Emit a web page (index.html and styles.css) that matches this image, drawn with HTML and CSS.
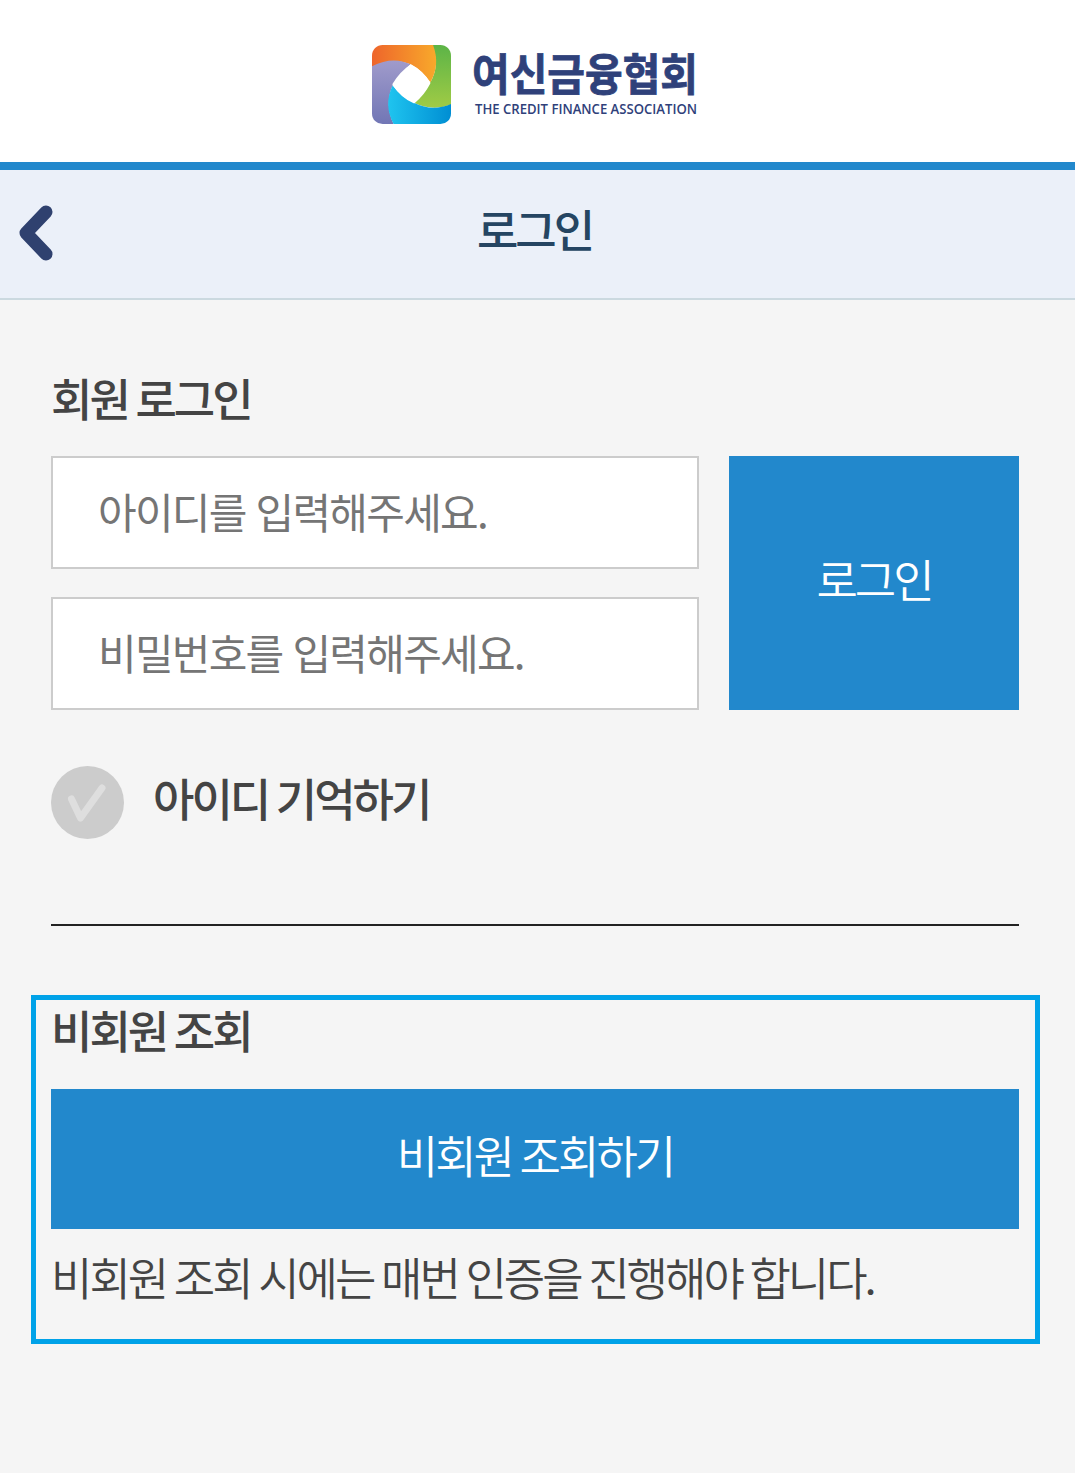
FILE: index.html
```html
<!DOCTYPE html>
<html lang="ko">

<head>
  <meta charset="UTF-8">
  <meta name="viewport" content="width=device-width, initial-scale=1.0">
  <title>여신금융협회 로그인</title>

  <link rel="stylesheet" href="styles.css">
</head>

<body>
  <header class="header">
    <svg class="logo-mark" viewBox="0 0 238 238">
      <defs>
        <linearGradient id="orange">
          <stop offset="0" stop-color="#ee652b" />
          <stop offset="1" stop-color="#f8a92b" />
        </linearGradient>
        <linearGradient id="green" x2="0" y2="1">
          <stop offset="0" stop-color="#5cb447" />
          <stop offset="1" stop-color="#a0cb45" />
        </linearGradient>
        <linearGradient id="purple" x2="0" y2="1">
          <stop offset="0" stop-color="#a09bcb" />
          <stop offset="1" stop-color="#7176b5" />
        </linearGradient>
        <linearGradient id="cyan">
          <stop offset="0" stop-color="#1fc4ef" />
          <stop offset="1" stop-color="#008ed3" />
        </linearGradient>
        <clipPath id="round">
          <rect width="238" height="238" rx="32" />
        </clipPath>
      </defs>
      <g clip-path="url(#round)">
        <path fill="url(#green)" d="M180 0H238V180Q180 200 128 175Q156 148 176 112Q206 60 180 0Z" />
        <path fill="url(#orange)" d="M0 0H184Q206 60 176 112Q150 76 116 58Q62 36 0 66Z" />
        <path fill="url(#purple)" d="M0 64Q62 32 116 58Q84 88 62 122Q38 180 65 238H0Z" />
        <path fill="url(#cyan)" d="M62 122Q90 158 128 175Q182 202 238 178V238H65Q34 180 62 122Z" />
        <path fill="#fff" d="M117 58Q156 78 176 115Q158 151 127 176Q87 160 61 118Q84 80 117 58Z" />
      </g>
    </svg>
    <div class="logo-text">
      <svg width="236" height="56" viewBox="0 0 236 56">
        <text class="logo-ko" x="0" y="46" textLength="226" lengthAdjust="spacingAndGlyphs">여신금융협회</text>
      </svg>
      <svg width="236" height="20" viewBox="0 0 236 20">
        <text class="logo-en" x="3" y="13" textLength="222" lengthAdjust="spacingAndGlyphs">THE CREDIT FINANCE ASSOCIATION</text>
      </svg>
    </div>
  </header>

  <div class="titlebar">
    <a class="back" href="#" aria-label="이전">
      <svg width="36" height="56" viewBox="0 0 36 56">
        <path d="M28 7L8 28L28 49" />
      </svg>
    </a>
    <h1>로그인</h1>
  </div>

  <main class="contain">
    <h2>회원 로그인</h2>
    <form class="login">
      <div class="fields">
        <input type="text" placeholder="아이디를 입력해주세요.">
        <input type="password" placeholder="비밀번호를 입력해주세요.">
      </div>
      <button type="button" class="btn">로그인</button>
    </form>

    <div class="remember">
      <svg width="73" height="73" viewBox="0 0 73 73">
        <circle cx="36.5" cy="36.5" r="36.5" />
        <path d="M20.5 33L29.5 52L51 22" />
      </svg>
      <span>아이디 기억하기</span>
    </div>

    <section class="guest">
      <h2>비회원 조회</h2>
      <button type="button" class="btn">비회원 조회하기</button>
      <p>비회원 조회 시에는 매번 인증을 진행해야 합니다.</p>
    </section>
  </main>
</body>

</html>
```
FILE: styles.css
```css
* {
  box-sizing: border-box;
}

body {
  margin: 0;
  min-height: 1473px;

  font-family: 'Noto Sans CJK KR', sans-serif;
  font-size: 45px;
  letter-spacing: -3px;
  word-spacing: -2px;

  color: #444;
  background-color: #f5f5f5;
}

h1,
h2,
p {
  margin: 0;
  font-size: 45px;
  line-height: 60px;
  white-space: nowrap;
}

h1,
h2 {
  font-weight: 500;
}

.header {
  display: flex;
  justify-content: center;
  gap: 21px;

  height: 170px;
  padding: 45px 0 0 4px;

  background-color: #fff;
  border-bottom: 8px solid #2288cc;
}

.logo-mark {
  width: 79px;
  height: 79px;
}

.logo-text {
  display: flex;
  flex-direction: column;

  width: 236px;

  fill: #2f417a;
  letter-spacing: 0;
  word-spacing: 0;
}

.logo-text svg {
  overflow: visible;
}

.logo-ko {
  font-size: 44px;
  font-weight: 700;
  stroke: #2f417a;
  stroke-width: 0.8;
}

.logo-en {
  font-family: 'Open Sans', sans-serif;
  font-size: 14px;
  font-weight: 600;
}

.titlebar {
  display: grid;
  grid-template-columns: 97px 1fr 103px;
  align-items: center;

  height: 130px;
  padding-bottom: 10px;

  background-color: #ebf0f9;
  border-bottom: 2px solid #cbd9e0;
}

.titlebar h1 {
  text-align: center;
  color: #254562;
}

.back {
  display: flex;
  padding: 8px 0 0 18px;
}

.back path {
  fill: none;
  stroke: #2f416f;
  stroke-width: 13;
  stroke-linecap: round;
  stroke-linejoin: round;
}

.contain {
  padding: 68px 56px 0 51px;
}

.login {
  display: flex;
  gap: 30px;
  margin-top: 28px;
}

.fields {
  display: flex;
  flex-direction: column;
  gap: 28px;
  width: 648px;
}

.fields input {
  height: 113px;
  padding: 0 45px 4px;

  font: inherit;
  font-size: 42px;
  letter-spacing: -1.75px;
  word-spacing: 0;

  background-color: #fff;
  border: 2px solid #ccc;
  border-radius: 0;
}

.fields input::placeholder {
  color: #757575;
}

.btn {
  padding: 0 0 10px;

  font: inherit;
  font-weight: 350;
  letter-spacing: -3px;
  word-spacing: -2px;

  color: #fff;
  background-color: #2288cc;
  border: none;
  cursor: pointer;
}

.login .btn {
  width: 290px;
}

.remember {
  display: flex;
  align-items: center;
  gap: 29px;

  height: 160px;
  margin-top: 56px;
  padding-bottom: 85px;

  font-weight: 500;
  border-bottom: 2px solid #222;
}

.remember span {
  line-height: 60px;
  margin-top: -10px;
}

.remember circle {
  fill: #ccc;
}

.remember path {
  fill: none;
  stroke: #dedede;
  stroke-width: 7;
  stroke-linecap: round;
  stroke-linejoin: round;
}

.guest {
  height: 349px;
  margin: 69px -21px 0 -20px;
  padding: 0 16px 0 15px;

  border: 5px solid #00a2e8;
}

.guest .btn {
  width: 100%;
  height: 140px;
  margin: 29px 0 18px;
}

.guest p {
  font-weight: 350;
}
```
